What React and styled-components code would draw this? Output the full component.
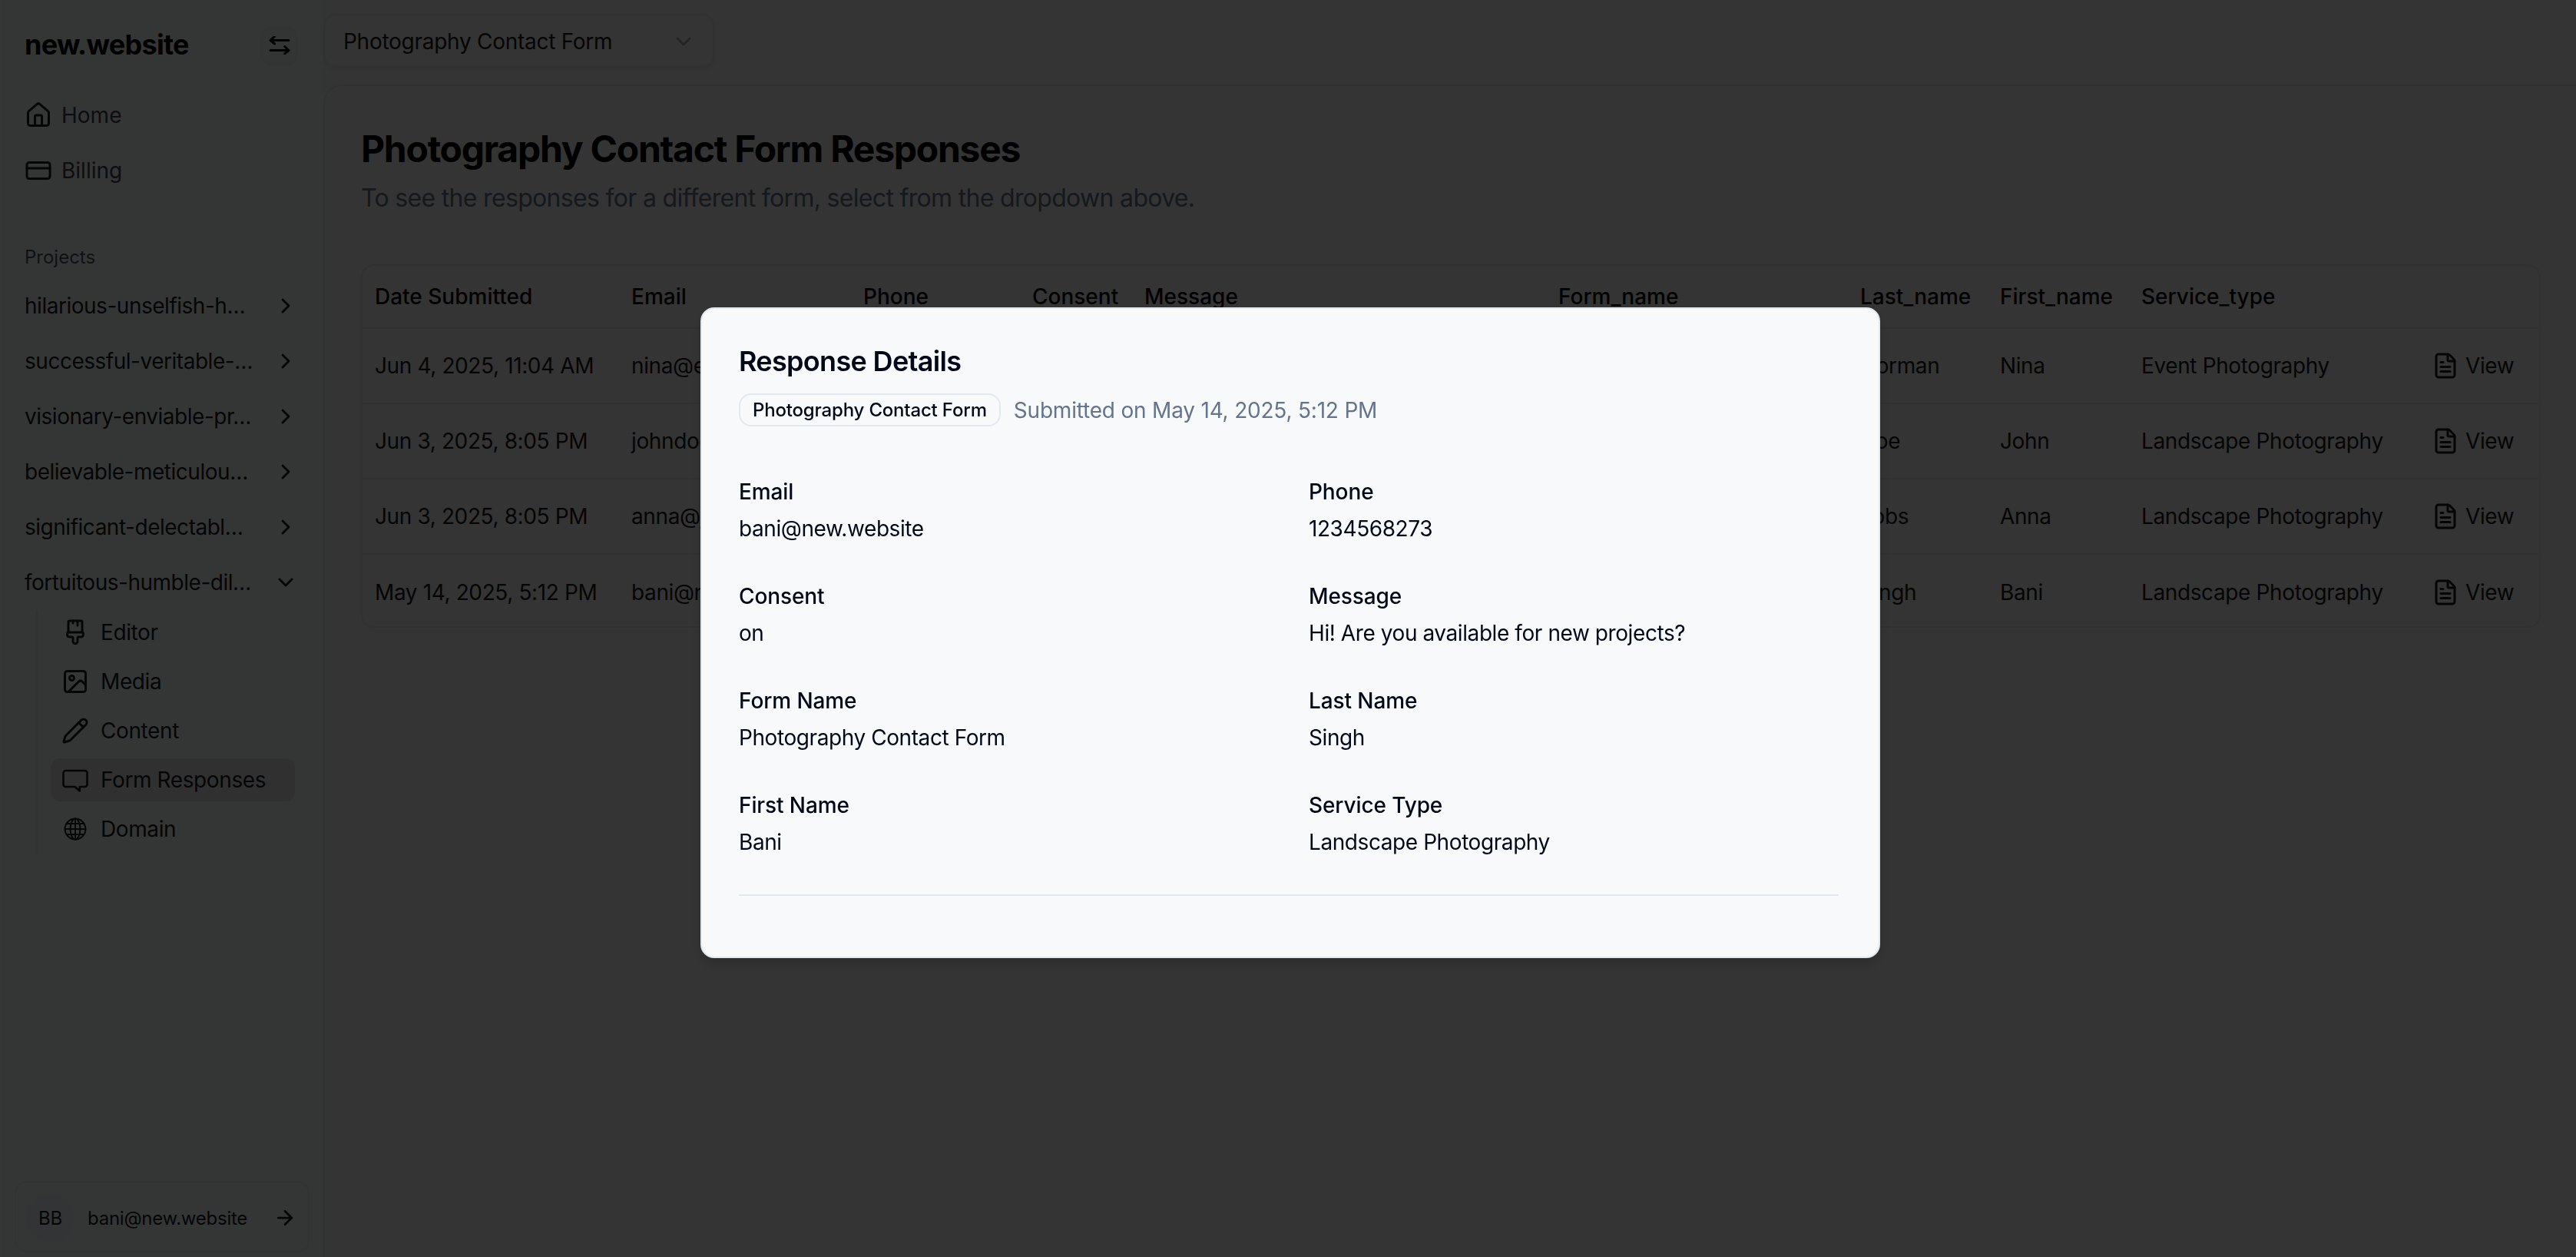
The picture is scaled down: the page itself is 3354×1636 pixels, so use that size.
import React from "react";
import styled, { createGlobalStyle } from "styled-components";
import {
  House,
  CreditCard,
  ChevronRight,
  ChevronDown,
  PaintbrushVertical,
  Image,
  Pencil,
  ArrowRight,
  FileText,
} from "lucide-react";

const Global = createGlobalStyle`
  html, body { margin: 0; padding: 0; height: 100%; }
  body { font-family: Inter, "Noto Sans", sans-serif; background: #f3f3f3; color: #09090b; overflow: hidden; }
  * { box-sizing: border-box; }
`;

const Shell = styled.div`
  display: flex;
  height: 1636px;
  width: 3354px;
`;

const Sidebar = styled.aside`
  width: 421px;
  flex: none;
  display: flex;
  flex-direction: column;
  padding: 2px 37px 0 32px;
  background: #f5ffff;
  border-left: 2px solid #ffffff;
`;

const LogoRow = styled.div`
  display: flex;
  align-items: center;
  justify-content: space-between;
  height: 112px;
  margin-left: -2px;
  margin-right: -3px;
`;

const Logo = styled.div`
  font-size: 36px;
  font-weight: 700;
  letter-spacing: -0.73px;
  color: #000;
`;

const SwapButton = styled.div`
  width: 47px;
  height: 49px;
  display: flex;
  align-items: center;
  justify-content: center;
  border-radius: 14px;
  border: 2px solid #ebf4f4;
  box-shadow: 0 2px 4px rgba(0, 0, 0, 0.06);
  color: #000;
  background: #f2fbfb;
  margin-top: 2px;
`;

const NavItem = styled.div`
  display: flex;
  align-items: center;
  gap: 12px;
  height: 72px;
  margin-left: -2px;
  font-size: 28px;
  color: #3f3f46;
  svg { flex: none; color: #18181b; }
`;

const SectionLabel = styled.div`
  margin: 61px 0 11px -2px;
  font-size: 24px;
  line-height: 32px;
  color: #52525b;
`;

const ProjectRow = styled.div`
  display: flex;
  align-items: center;
  justify-content: space-between;
  height: 72px;
  margin-left: -2px;
  font-size: 28px;
  letter-spacing: -0.48px;
  color: #18181b;
  svg { flex: none; margin-right: -4px; }
`;

const SubList = styled.div`
  display: flex;
  flex-direction: column;
  gap: 8px;
  margin: 1px 0 0 13px;
  padding: 0 0 3px 17px;
  border-left: 2px solid #e6efef;
`;

const SubItem = styled.div`
  display: flex;
  align-items: center;
  gap: 15px;
  height: 56px;
  padding-left: 14px;
  border-radius: 12px;
  font-size: 28px;
  letter-spacing: -0.4px;
  color: #18181b;
  background: ${(p) => (p.$active ? "#e0e2e2" : "transparent")};
  svg { flex: none; }
`;

const UserCard = styled.div`
  margin: auto -19px 6px -15px;
  height: 93px;
  display: flex;
  align-items: center;
  padding: 3px 0 0 13px;
  border: 2px solid #ebf4f4;
  border-radius: 16px;
  font-size: 24px;
  letter-spacing: -0.25px;
  color: #18181b;
`;

const Avatar = styled.div`
  width: 63px;
  height: 63px;
  flex: none;
  border-radius: 50%;
  display: flex;
  align-items: center;
  justify-content: center;
  background: #eff4fb;
  margin-right: 17px;
`;

const UserMail = styled.div`
  flex: 1;
`;

const UserArrow = styled.div`
  display: flex;
  margin-right: 15px;
`;

const Main = styled.main`
  flex: 1;
  min-width: 0;
  display: flex;
  flex-direction: column;
  background: #f3f3f3;
`;

const TopBar = styled.header`
  height: 110px;
  flex: none;
  padding-top: 18px;
`;

const FormSelect = styled.div`
  width: 509px;
  height: 70px;
  display: flex;
  align-items: center;
  justify-content: space-between;
  padding: 2px 22px 0 24px;
  border: 2px solid #e8e8e8;
  border-radius: 16px;
  box-shadow: 0 2px 4px rgba(0, 0, 0, 0.05);
  font-size: 28px;
  letter-spacing: -0.27px;
  color: #18181b;
  svg { opacity: 0.35; }
`;

const Panel = styled.section`
  flex: 1;
  padding: 48px 46px 0 47px;
  border-top: 2px solid #e6e6e6;
  border-left: 2px solid #e6e6e6;
  border-top-left-radius: 24px;
  background: #f3f3f3;
`;

const Title = styled.h1`
  margin: 2px 0 0;
  font-size: 48px;
  line-height: 64px;
  font-weight: 700;
  letter-spacing: -1.26px;
  color: #000;
`;

const Subtitle = styled.p`
  margin: 10px 0 0;
  font-size: 32px;
  line-height: 44px;
  letter-spacing: -0.68px;
  color: #64748b;
`;

const TableBox = styled.div`
  margin-top: 64px;
  border: 2px solid #e6e6e6;
  border-radius: 16px;
  overflow: hidden;
  height: 473px;
`;

const Table = styled.table`
  width: 100%;
  table-layout: fixed;
  border-collapse: collapse;
  font-size: 28px;
`;

const Col = styled.col`
  width: ${(p) => p.$w}px;
`;

const HeadCell = styled.th`
  height: 81px;
  padding: 0 16px;
  text-align: left;
  font-weight: 500;
  color: #09090b;
  white-space: nowrap;
  overflow: hidden;
  border-bottom: 2px solid #e6e6e6;
`;

const Cell = styled.td`
  height: 98px;
  padding: 0 16px;
  letter-spacing: -0.38px;
  color: #18181b;
  white-space: nowrap;
  overflow: hidden;
`;

const Row = styled.tr`
  & + & td { border-top: 2px solid #e6e6e6; }
`;

const ViewLink = styled.div`
  display: flex;
  align-items: center;
  gap: 8px;
  svg { flex: none; }
`;

const Overlay = styled.div`
  position: fixed;
  inset: 0;
  background: rgba(0, 0, 0, 0.79);
  padding: 400px 0 0 912px;
`;

const Modal = styled.div`
  width: 1536px;
  height: 847px;
  padding: 50px 52px 48px 48px;
  border: 2px solid #e2e8f0;
  border-radius: 18px;
  background: #f7f9fb;
  box-shadow: 0 8px 16px rgba(0, 0, 0, 0.15);
  color: #020817;
`;

const ModalTitle = styled.h2`
  margin: 0;
  font-size: 36px;
  line-height: 36px;
  font-weight: 600;
  letter-spacing: -0.67px;
`;

const ModalMeta = styled.div`
  display: flex;
  align-items: center;
  gap: 17px;
  margin-top: 24px;
`;

const Badge = styled.span`
  height: 43px;
  display: flex;
  align-items: center;
  padding: 0 16px;
  border: 2px solid #e2e8f0;
  border-radius: 16px;
  font-size: 24px;
  font-weight: 500;
  letter-spacing: -0.18px;
`;

const Submitted = styled.span`
  font-size: 28px;
  letter-spacing: -0.2px;
  color: #64748b;
`;

const FieldGrid = styled.div`
  display: grid;
  grid-template-columns: 1fr 1fr;
  column-gap: 52px;
  row-gap: 48px;
  margin-top: 65px;
  padding-bottom: 48px;
  border-bottom: 2px solid #e2e8f0;
`;

const Field = styled.div`
  display: flex;
  flex-direction: column;
  gap: 8px;
  font-size: 28px;
  line-height: 40px;
`;

const FieldLabel = styled.div`
  font-weight: 500;
  letter-spacing: -0.1px;
`;

const FieldValue = styled.div`
  letter-spacing: -0.42px;
`;

const IconSvg = styled.svg`
  flex: none;
  fill: none;
  stroke: currentColor;
  stroke-linecap: round;
  stroke-linejoin: round;
`;

const SwapIcon = () => (
  <IconSvg width="28" height="24" viewBox="0 0 28 24" strokeWidth="3">
    <path d="M26 5.5H2M2 5.5l5.5-5M2 5.5l5.5 4.5M2 18.5h24M26 18.5l-5.5-5M26 18.5l-5.5 4.5" />
  </IconSvg>
);

const ChatIcon = () => (
  <IconSvg width="36" height="36" viewBox="0 0 36 36" strokeWidth="2.6">
    <path d="M5.5 6h25a3 3 0 0 1 3 3v15a3 3 0 0 1-3 3h-3.2l-3.5 0v5.5L17.5 27H5.5a3 3 0 0 1-3-3V9a3 3 0 0 1 3-3z" />
  </IconSvg>
);

const GlobeIcon = () => (
  <IconSvg width="36" height="36" viewBox="0 0 36 36" strokeWidth="2">
    <circle cx="18" cy="18" r="13.4" />
    <ellipse cx="18" cy="18" rx="6.4" ry="13.4" />
    <path d="M18 4.6v26.8M4.6 18h26.8M6.6 11h22.8M6.6 25h22.8" />
  </IconSvg>
);

const projects = [
  "hilarious-unselfish-h…",
  "successful-veritable-…",
  "visionary-enviable-pr…",
  "believable-meticulou…",
  "significant-delectabl…",
];

const subItems = [
  { label: "Editor", icon: <PaintbrushVertical size={36} strokeWidth={2} /> },
  { label: "Media", icon: <Image size={36} strokeWidth={2} /> },
  { label: "Content", icon: <Pencil size={36} strokeWidth={2} /> },
  { label: "Form Responses", icon: <ChatIcon />, active: true },
  { label: "Domain", icon: <GlobeIcon /> },
];

const columns = [
  ["Date Submitted", 334],
  ["Email", 302],
  ["Phone", 220],
  ["Consent", 146],
  ["Message", 539],
  ["Form_name", 393],
  ["Last_name", 182],
  ["First_name", 184],
  ["Service_type", 378],
  ["", 157],
];

const rows = [
  ["Jun 4, 2025, 11:04 AM", "nina@example.com", "1234567890", "on", "Looking for a photographer", "Photography Contact Form", "Norman", "Nina", "Event Photography"],
  ["Jun 3, 2025, 8:05 PM", "johndoe@gmail.com", "1234567890", "on", "Hello there", "Photography Contact Form", "Doe", "John", "Landscape Photography"],
  ["Jun 3, 2025, 8:05 PM", "anna@jobs.com", "1234567890", "on", "Hello there", "Photography Contact Form", "Jobs", "Anna", "Landscape Photography"],
  ["May 14, 2025, 5:12 PM", "bani@new.website", "1234568273", "on", "Hi! Are you available?", "Photography Contact Form", "Singh", "Bani", "Landscape Photography"],
];

const fields = [
  ["Email", "bani@new.website"],
  ["Phone", "1234568273"],
  ["Consent", "on"],
  ["Message", "Hi! Are you available for new projects?"],
  ["Form Name", "Photography Contact Form"],
  ["Last Name", "Singh"],
  ["First Name", "Bani"],
  ["Service Type", "Landscape Photography"],
];

export default function App() {
  return (
    <>
      <Global />
      <Shell>
        <Sidebar>
          <LogoRow>
            <Logo>new.website</Logo>
            <SwapButton>
              <SwapIcon />
            </SwapButton>
          </LogoRow>
          <NavItem>
            <House size={36} strokeWidth={2} />
            Home
          </NavItem>
          <NavItem>
            <CreditCard size={36} strokeWidth={2} />
            Billing
          </NavItem>
          <SectionLabel>Projects</SectionLabel>
          {projects.map((name) => (
            <ProjectRow key={name}>
              {name}
              <ChevronRight size={32} strokeWidth={2.2} />
            </ProjectRow>
          ))}
          <ProjectRow>
            fortuitous-humble-dil…
            <ChevronDown size={32} strokeWidth={2.2} />
          </ProjectRow>
          <SubList>
            {subItems.map((item) => (
              <SubItem key={item.label} $active={item.active}>
                {item.icon}
                {item.label}
              </SubItem>
            ))}
          </SubList>
          <UserCard>
            <Avatar>BB</Avatar>
            <UserMail>bani@new.website</UserMail>
            <UserArrow>
              <ArrowRight size={30} strokeWidth={2.2} />
            </UserArrow>
          </UserCard>
        </Sidebar>
        <Main>
          <TopBar>
            <FormSelect>
              Photography Contact Form
              <ChevronDown size={32} strokeWidth={2} />
            </FormSelect>
          </TopBar>
          <Panel>
            <Title>Photography Contact Form Responses</Title>
            <Subtitle>To see the responses for a different form, select from the dropdown above.</Subtitle>
            <TableBox>
              <Table>
                <colgroup>
                  {columns.map(([name, w]) => (
                    <Col key={name} $w={w} />
                  ))}
                </colgroup>
                <thead>
                  <tr>
                    {columns.map(([name]) => (
                      <HeadCell key={name}>{name}</HeadCell>
                    ))}
                  </tr>
                </thead>
                <tbody>
                  {rows.map((r, i) => (
                    <Row key={i}>
                      {r.map((v, j) => (
                        <Cell key={j}>{v}</Cell>
                      ))}
                      <Cell>
                        <ViewLink>
                          <FileText size={36} strokeWidth={2} />
                          View
                        </ViewLink>
                      </Cell>
                    </Row>
                  ))}
                </tbody>
              </Table>
            </TableBox>
          </Panel>
        </Main>
      </Shell>
      <Overlay>
        <Modal>
          <ModalTitle>Response Details</ModalTitle>
          <ModalMeta>
            <Badge>Photography Contact Form</Badge>
            <Submitted>Submitted on May 14, 2025, 5:12 PM</Submitted>
          </ModalMeta>
          <FieldGrid>
            {fields.map(([label, value]) => (
              <Field key={label}>
                <FieldLabel>{label}</FieldLabel>
                <FieldValue>{value}</FieldValue>
              </Field>
            ))}
          </FieldGrid>
        </Modal>
      </Overlay>
    </>
  );
}
